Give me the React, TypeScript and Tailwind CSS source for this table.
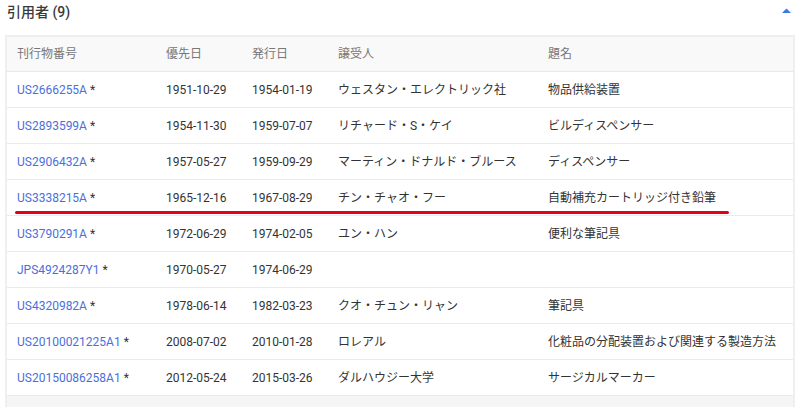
import React from "react";

const rows = [
  ["US2666255A", "1951-10-29", "1954-01-19", "ウェスタン・エレクトリック社", "物品供給装置"],
  ["US2893599A", "1954-11-30", "1959-07-07", "リチャード・S・ケイ", "ビルディスペンサー"],
  ["US2906432A", "1957-05-27", "1959-09-29", "マーティン・ドナルド・ブルース", "ディスペンサー"],
  ["US3338215A", "1965-12-16", "1967-08-29", "チン・チャオ・フー", "自動補充カートリッジ付き鉛筆"],
  ["US3790291A", "1972-06-29", "1974-02-05", "ユン・ハン", "便利な筆記具"],
  ["JPS4924287Y1", "1970-05-27", "1974-06-29", "", ""],
  ["US4320982A", "1978-06-14", "1982-03-23", "クオ・チュン・リャン", "筆記具"],
  ["US20100021225A1", "2008-07-02", "2010-01-28", "ロレアル", "化粧品の分配装置および関連する製造方法"],
  ["US20150086258A1", "2012-05-24", "2015-03-26", "ダルハウジー大学", "サージカルマーカー"],
];

const grid = "grid grid-cols-[149px_86px_86px_210px_1fr] pl-[10px] items-center";

export default function App() {
  return (
    <div
      className="w-[800px] h-[407px] overflow-hidden bg-white text-[#333]"
      style={{ fontFamily: 'Roboto, "Noto Sans CJK JP", sans-serif' }}
    >
      <div className="flex items-center justify-between h-[25px] pl-[7px] pr-[9px]">
        <span className="text-[14px] font-medium text-[#3a3a3a]">引用者 (9)</span>
        <svg width="9" height="6" viewBox="0 0 9 6" className="mb-[3px]">
          <polygon points="0,5 4.5,0.5 9,5" fill="#3b78e7" />
        </svg>
      </div>
      <div className="mt-[10px] ml-[5px] w-[790px] border-2 border-[#efefef] relative">
        <div className={`${grid} h-[35px] bg-[#f9f9f9] border-b border-[#e8e8e8] text-[12px] text-[#777]`}>
          <span>刊行物番号</span>
          <span>優先日</span>
          <span>発行日</span>
          <span>譲受人</span>
          <span>題名</span>
        </div>
        {rows.map((r) => (
          <div key={r[0]} className={`${grid} h-[36px] border-b border-[#ebebeb] text-[12px]`}>
            <span>
              <span className="text-[#4a6fdc]">{r[0]}</span>
              <span className="text-[#333]"> *</span>
            </span>
            <span>{r[1]}</span>
            <span>{r[2]}</span>
            <span>{r[3]}</span>
            <span>{r[4]}</span>
          </div>
        ))}
        <div className="h-[20px] bg-[#f5f5f5]" />
        <div className="absolute left-[8px] top-[174px] w-[714px] h-[3px] rounded-full bg-[#e3001b]" />
      </div>
    </div>
  );
}
